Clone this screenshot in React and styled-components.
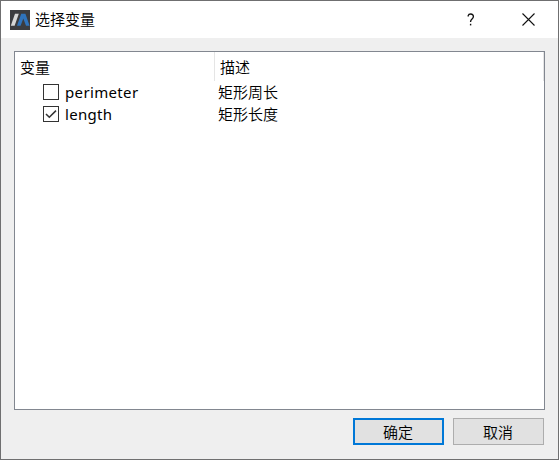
import React from "react";
import styled, { createGlobalStyle } from "styled-components";

const Global = createGlobalStyle`
  * { box-sizing: border-box; }
  body { margin: 0; background: #6f6f70; }
`;

const Dialog = styled.div`
  width: 559px;
  height: 460px;
  display: flex;
  flex-direction: column;
  border: 1px solid #6f6f70;
  background: #efefef;
  color: #000;
  font: 15px/22px "Noto Sans", "Noto Sans CJK SC", sans-serif;
`;

const TitleBar = styled.header`
  height: 37px;
  flex: none;
  display: flex;
  align-items: center;
  padding-left: 9px;
  background: #fff;
`;

const Title = styled.h1`
  flex: 1;
  margin: 0 0 2px 5px;
  font: 350 15px/22px "Noto Sans CJK SC", sans-serif;
`;

const WindowButton = styled.button`
  width: ${(p) => p.$width}px;
  height: 37px;
  padding: 0;
  border: 0;
  background: none;
  display: flex;
  align-items: center;
  justify-content: center;
`;

const Content = styled.main`
  flex: 1;
  display: flex;
  flex-direction: column;
  gap: 8px;
  padding: 13px 13px 14px;
`;

const Table = styled.div`
  height: 359px;
  border: 1px solid #828790;
  background: #fff;
`;

const HeaderRow = styled.div`
  display: grid;
  grid-template-columns: 200px 329px;
  height: 30px;
  margin-bottom: -1px;
`;

const HeaderCell = styled.div`
  height: 29px;
  padding: 4px 0 0 5px;
  border-right: 1px solid #e5e5e5;
  font-family: "Noto Sans CJK SC", sans-serif;
  font-weight: 350;
`;

const Row = styled.label`
  display: grid;
  grid-template-columns: 203px 1fr;
  height: 22px;
`;

const NameCell = styled.span`
  display: flex;
  align-items: center;
  gap: 6px;
  padding-left: 28px;
`;

const Name = styled.span`
  letter-spacing: ${(p) => p.$tracking}px;
`;

const Description = styled.span`
  font-family: "Noto Sans CJK SC", sans-serif;
  font-weight: 350;
`;

const CheckBox = styled.span`
  width: 16px;
  height: 16px;
  display: flex;
  border: 1px solid #333;
  background: #fff;
`;

const Actions = styled.footer`
  display: flex;
  justify-content: flex-end;
  gap: 9px;
  padding-right: 1px;
`;

const ActionButton = styled.button`
  width: 91px;
  height: 27px;
  padding: 0 1px 0 0;
  border: ${(p) => (p.$primary ? "2px solid #0078d7" : "1px solid #adadad")};
  background: #e1e1e1;
  color: #000;
  font: 350 15px/22px "Noto Sans CJK SC", sans-serif;
`;

const variables = [
  { name: "perimeter", description: "矩形周长", checked: false, tracking: 0.35 },
  { name: "length", description: "矩形长度", checked: true, tracking: 0.3 },
];

function Logo() {
  return (
    <svg width="20" height="20" viewBox="0 0 20 20">
      <rect width="20" height="20" fill="#3b3d41" />
      <path d="M.8 15.8 5 3.8H8.8L4.6 15.8Z" fill="#d5d7d8" />
      <path d="M7 15.8 11.2 3.8H15.4L19.6 15.8H16L13.3 8.4 10.6 15.8Z" fill="#2f74bd" />
    </svg>
  );
}

export default function App() {
  return (
    <>
      <Global />
      <Dialog>
        <TitleBar>
          <Logo />
          <Title>选择变量</Title>
          <WindowButton $width={54} aria-label="Help">
            <svg width="8" height="14" viewBox="0 0 8 14" fill="none" stroke="#111" strokeWidth="1.35">
              <path d="M1.2 3.4V2.7Q1.6 1 3.7 1 6.4 1 6.4 3.5C6.4 6 3.6 5.8 3.6 8.5V9" />
              <path d="M2.9 11.6H4.3" strokeWidth="1.6" />
            </svg>
          </WindowButton>
          <WindowButton $width={60} aria-label="Close">
            <svg width="13" height="13" viewBox="0 0 13 13" stroke="#111" strokeWidth="1.1">
              <path d="M.5.5 12.5 12.5M12.5.5.5 12.5" />
            </svg>
          </WindowButton>
        </TitleBar>
        <Content>
          <Table>
            <HeaderRow>
              <HeaderCell>变量</HeaderCell>
              <HeaderCell>描述</HeaderCell>
            </HeaderRow>
            {variables.map((v) => (
              <Row key={v.name}>
                <NameCell>
                  <CheckBox>
                    {v.checked && (
                      <svg width="14" height="14" viewBox="0 0 14 14" fill="none" stroke="#333" strokeWidth="1.5">
                        <path d="M2 7 5.3 10.3 12 3.6" />
                      </svg>
                    )}
                  </CheckBox>
                  <Name $tracking={v.tracking}>{v.name}</Name>
                </NameCell>
                <Description>{v.description}</Description>
              </Row>
            ))}
          </Table>
          <Actions>
            <ActionButton $primary>确定</ActionButton>
            <ActionButton>取消</ActionButton>
          </Actions>
        </Content>
      </Dialog>
    </>
  );
}
